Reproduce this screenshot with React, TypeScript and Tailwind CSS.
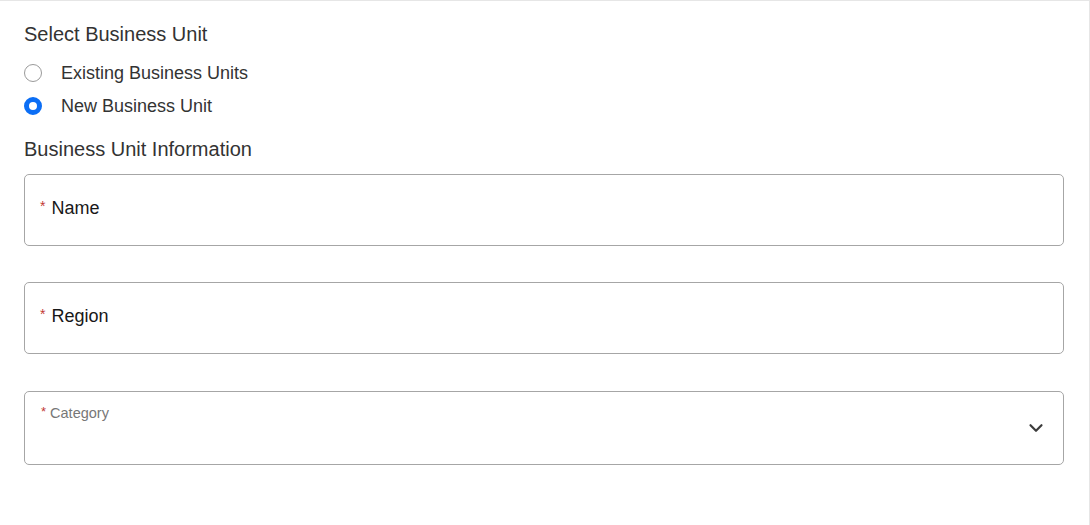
import React, { useState } from 'react';
import { ChevronDown } from 'lucide-react';

const options = [
  { key: 'existing', label: 'Existing Business Units' },
  { key: 'new', label: 'New Business Unit' },
];

const Radio: React.FC<{ checked: boolean; label: string; onClick: () => void }> = ({ checked, label, onClick }) => (
  <button onClick={onClick} className="flex h-[33px] items-center text-left">
    <span
      className={`block h-[18px] w-[18px] rounded-full bg-white ${
        checked ? 'border-[5px] border-[#0b6ef5]' : 'border border-[#9a9a9a]'
      }`}
    />
    <span className="ml-[19px] text-[18px] leading-6 text-[#333]">{label}</span>
  </button>
);

const TextField: React.FC<{ label: string; className?: string }> = ({ label, className = '' }) => (
  <div className={`flex h-[72px] items-center rounded-[5px] border border-[#a6a6a6] bg-white pb-[5px] pl-[15px] ${className}`}>
    <span className="mr-[6px] -mt-[3px] text-[14px] text-[#c23934]">*</span>
    <span className="text-[18px] leading-6 text-[#181818]">{label}</span>
  </div>
);

export default function App() {
  const [unit, setUnit] = useState('new');

  return (
    <div
      className="h-[525px] w-full border-t border-r border-[#e6e6e6] bg-white pl-6 pr-[25px] pt-[21px]"
      style={{ fontFamily: '"Liberation Sans", Arial, sans-serif' }}
    >
      <h2 className="h-6 text-[20px] leading-6 text-[#333]">Select Business Unit</h2>

      <div className="mt-[10px] flex flex-col">
        {options.map((o) => (
          <Radio key={o.key} label={o.label} checked={unit === o.key} onClick={() => setUnit(o.key)} />
        ))}
      </div>

      <h2 className="mt-[15px] h-6 text-[20px] leading-6 text-[#333]">Business Unit Information</h2>

      <TextField label="Name" className="mt-[13px]" />
      <TextField label="Region" className="mt-9" />

      {/* Category select */}
      <div className="relative mt-[37px] h-[74px] rounded-[5px] border border-[#a6a6a6] bg-white">
        <div className="flex items-center pl-[16px] pt-[11px]">
          <span className="mr-[4px] -mt-[2px] text-[13px] text-[#c23934]">*</span>
          <span className="text-[14.5px] leading-5 text-[#777]">Category</span>
        </div>
        <ChevronDown className="absolute right-[16px] top-[25px] h-[22px] w-[22px] text-[#3c3c3c]" strokeWidth={2.4} />
      </div>
    </div>
  );
}
